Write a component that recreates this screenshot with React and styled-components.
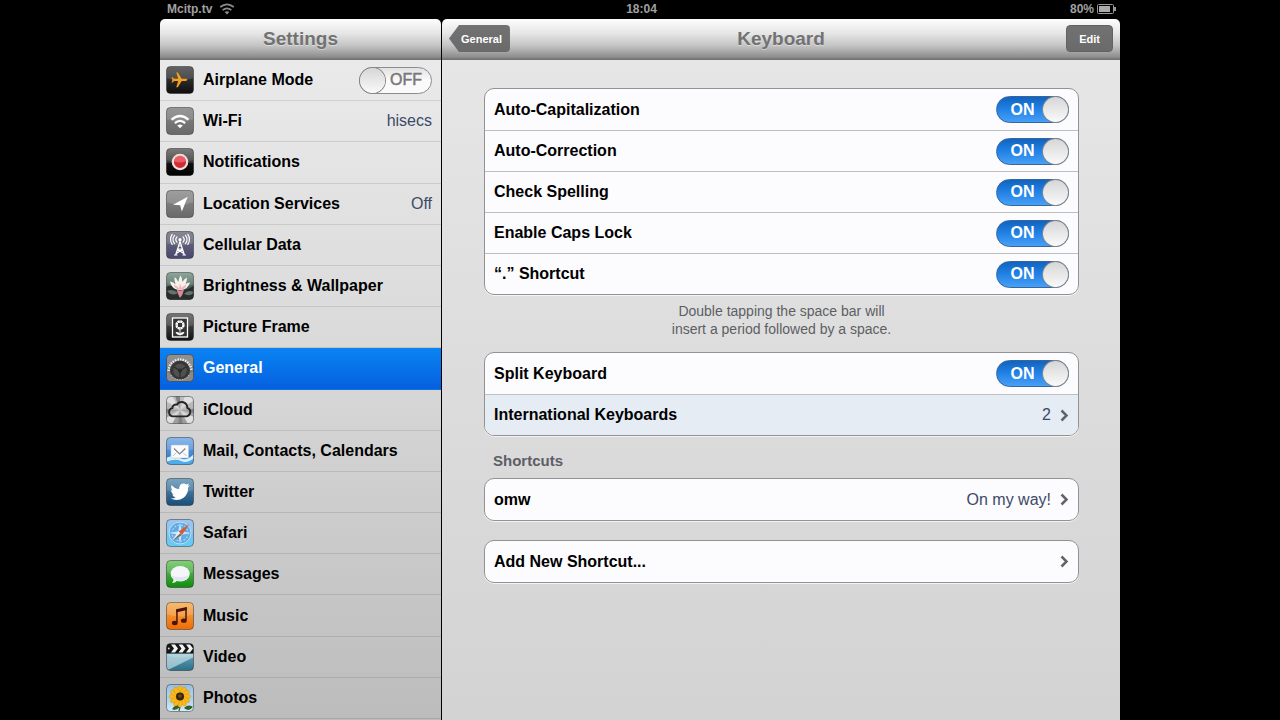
import { useState } from "react";
import styled, { createGlobalStyle } from "styled-components";

const GlobalStyle = createGlobalStyle`
*{
    box-sizing:border-box;
}

body{
    margin:0;
    background:#000;
    color:#000;
    font-family:"Liberation Sans", Arial, Helvetica, sans-serif;
}

a{
    color:inherit;
    text-decoration:none;
}
`;

// every app icon is a 28x28 rounded tile with a shine on its upper half
function Tile({ id, top, bottom, children }) {
    return (
        <TileSvg viewBox="0 0 28 28" aria-hidden="true">
            <defs>
                <linearGradient id={id} x1="0" y1="0" x2="0" y2="1">
                    <stop offset="0" stopColor={top} />
                    <stop offset="1" stopColor={bottom} />
                </linearGradient>
                <clipPath id={id + "-clip"}>
                    <rect x="0.5" y="0.5" width="27" height="27" rx="4" />
                </clipPath>
            </defs>
            <g clipPath={`url(#${id}-clip)`}>
                <rect width="28" height="28" fill={`url(#${id})`} />
                <path d="M0 0h28v12q-14 5-28 0z" fill="#fff" opacity="0.15" />
                {children}
            </g>
            <rect x="0.5" y="0.5" width="27" height="27" rx="4" fill="none" stroke="#222" strokeOpacity="0.45" />
        </TileSvg>
    );
}

const AirplaneIcon = () => (
    <Tile id="airplane" top="#4a4a4a" bottom="#0c0c0c">
        <path
            transform="translate(22.6 5) rotate(90) scale(0.77)"
            fill="#f9a01b"
            d="M21 16v-2l-8-5V3.5c0-.83-.67-1.5-1.5-1.5S10 2.67 10 3.5V9l-8 5v2l8-2.5V19l-2 1.5V22l3.5-1 3.5 1v-1.5L13 19v-5.5l8 2.5z"
        />
    </Tile>
);

const WifiIcon = () => (
    <Tile id="wifi" top="#858585" bottom="#696969">
        <g fill="none" stroke="#fff" strokeWidth="2.3">
            <path d="M5.6 12.6q8.4-7.2 16.8 0" />
            <path d="M8.8 16.1q5.2-4.4 10.4 0" />
        </g>
        <path d="M11.2 18.4q2.8-2 5.6 0L14 21.3z" fill="#fff" />
    </Tile>
);

const NotificationsIcon = () => (
    <Tile id="notifications" top="#666" bottom="#000">
        <rect y="15" width="28" height="13" fill="#000" opacity="0.6" />
        <circle cx="14" cy="14" r="7.2" fill="#d02c32" stroke="#f2dede" strokeWidth="2.2" />
        <path d="M8 13.5a6 6 0 0 1 12 0q-6 2-12 0z" fill="#ec6d70" opacity="0.8" />
    </Tile>
);

const LocationIcon = () => (
    <Tile id="location" top="#8f8f8f" bottom="#686868">
        <path d="M21.8 6.8L15.8 21.5l-1.6-6.2-7.2-.5z" fill="#fff" />
    </Tile>
);

const CellularIcon = () => (
    <Tile id="cellular" top="#737380" bottom="#46466e">
        <g fill="none" stroke="#fff" strokeWidth="1.2" strokeLinecap="round">
            <path d="M14 10.5L9.6 24M14 10.5L18.4 24M12.5 15h3M11.7 18h4.8M11.5 18.2l5.8 4M16.5 18.2l-5.8 4M8.5 24h2.5M17 24h2.5" />
            <path d="M11 5.8a4 4 0 0 0 0 5.4M17 5.8a4 4 0 0 1 0 5.4M8.6 4.4a6.4 6.4 0 0 0 0 8.2M19.4 4.4a6.4 6.4 0 0 1 0 8.2M6.2 3.4a9 9 0 0 0 0 10M21.8 3.4a9 9 0 0 1 0 10" />
        </g>
        <circle cx="14" cy="8.7" r="1.6" fill="#fff" />
    </Tile>
);

const BrightnessIcon = () => (
    <Tile id="brightness" top="#7b9a8e" bottom="#20302a">
        <path d="M0 15q7-3 14 1t14-3v15H0z" fill="#272e2d" />
        <path d="M1 19q6-3 11 2-6 4-11-2zM18 22q4-5 10-2-3 5-10 2z" fill="#66736d" />
        <path d="M13.5 18C8 18 5 14 4 9.5q4 .3 5.5 3Q8 8 8.5 5q3 2 3.8 5 .5-4 2.2-6.5Q16.500 6 16.500 10q1.500-3.500 4.500-4.500 0 4-1.500 7Q21 10.500 24 10.500 22 17 15.500 18z" fill="#f7f1ea" />
        <path d="M13.500 17.500Q9 17 7.500 13q3.500.5 5.500 3l1.200-5 1.300 5q2-3 5-3-1 4-5 4.800z" fill="#eeb6bf" />
        <path d="M10.500 17.500q3.500 2 7.500 0l-1.500 5-2.500 3.500-1.500-3z" fill="#d98b9c" />
    </Tile>
);

const PictureFrameIcon = () => (
    <Tile id="frame" top="#5f5f5f" bottom="#111">
        <rect x="6.5" y="5" width="15" height="19" fill="#333" stroke="#fff" strokeWidth="1.3" />
        <circle cx="14" cy="12" r="3.6" fill="none" stroke="#fff" strokeWidth="2.2" strokeDasharray="2.2 .6" />
        <circle cx="14" cy="12" r="3" fill="none" stroke="#fff" strokeWidth="1" />
        <path d="M14 16v6.5M14 21.500q-1-2.500-4-2 1 2.500 4 2zM14 21.500q1-2.500 4-2-1 2.500-4 2z" fill="#fff" stroke="#fff" strokeWidth=".9" />
    </Tile>
);

const GeneralIcon = () => (
    <Tile id="general" top="#7d7d7d" bottom="#777">
        <path d="M2.8 17a11.200 11.200 0 0 1 22.400 0" fill="none" stroke="#f0f0f0" strokeWidth="3" strokeDasharray="1.4 1.1" />
        <circle cx="14" cy="16.5" r="10" fill="#373737" />
        <circle cx="14" cy="16.500" r="6.800" fill="#505050" />
        <circle cx="14" cy="16.500" r="2" fill="#2b2b2b" />
        <path d="M14 16.500l-6-3.500M14 16.500l6-3.500M14 16.500v7" stroke="#2b2b2b" strokeWidth="1.200" />
        <path d="M0 17.500q3.500 0 5 3.500 3 4.500 9 4.500t9-4.500q1.500-3.500 5-3.500V28H0z" fill="#8a8a8a" />
        <path d="M5 21q3 4.800 9 4.800t9-4.800" fill="none" stroke="#b5b5b5" strokeWidth="1.200" strokeDasharray="1.300 1.200" />
    </Tile>
);

const ICloudIcon = () => (
    <Tile id="icloud" top="#b5b5b5" bottom="#9b9b9b">
        <path d="M14 14L0 5V0h6zM14 14L19 0h9v4zM14 14l14 7v7h-6zM14 14L6 28H0v-6z" fill="#e0e0e0" />
        <path d="M14 14L9 0h5zM14 14l14-1v4zM14 14l-2 14h5zM14 14L0 13v4z" fill="#828282" />
        <path
            transform="translate(-1.8 -2.8) scale(1.13)"
            d="M8 20.5a3.7 3.7 0 0 1-.8-7.3 3.2 3.2 0 0 1 4-3.1 5 5 0 0 1 9.2 2.900 3.900 3.900 0 0 1-.4 7.500z"
            fill="#ccc"
            fillOpacity=".4"
            stroke="#272727"
            strokeWidth="1.7"
        />
    </Tile>
);

const MailIcon = () => (
    <Tile id="mail" top="#78ade6" bottom="#1c70cf">
        <path d="M0 21q8-4 14 0t14-4v11H0z" fill="#d9f0ff" />
        <path d="M0 25q9-4 15-1t13-3v7H0z" fill="#4faae8" />
        <rect x="5" y="8" width="17.5" height="13" rx=".8" fill="#fbfbfb" stroke="#b4c6d6" strokeWidth=".6" />
        <path d="M8 11.500l5.700 5.500 5.700-5.500" fill="none" stroke="#7d858e" strokeWidth="1.200" />
        <path d="M7 19l3.500-3.500M20.500 19l-3.500-3.500" fill="none" stroke="#b9c0c7" strokeWidth="1" />
    </Tile>
);

const TwitterIcon = () => (
    <Tile id="twitter" top="#6397b8" bottom="#174b79">
        <path
            d="M4.5 20.5q3 .3 5.2-1.3-2.7-.4-3.5-2.8h1.6Q5 15 5 12l1.6.4Q4.3 10 5.7 7q3 3.8 7.4 4Q13 6 17 5.4q2.200-.1 3.400 1.200l2.700-1-1.400 2.300 2.300-.6-1.900 2.300q.2 6.500-4.500 10.200-6 4-13.100.7z"
            fill="#fff"
        />
    </Tile>
);

const SafariIcon = () => (
    <Tile id="safari" top="#8bb9ec" bottom="#62ccf5">
        <circle cx="14" cy="14" r="11" fill="#62aae6" stroke="#b9e0fa" strokeWidth="1" />
        <circle cx="14" cy="14" r="8" fill="none" stroke="#a5d7f7" strokeWidth="1.2" strokeDasharray="2 1.5" />
        <path d="M14 3l1.700 9.300L25 14l-9.300 1.700L14 25l-1.700-9.300L3 14l9.300-1.700z" fill="#c4e6fb" />
        <path d="M23.500 5L16 16 12.400 12.600z" fill="#d85a38" />
        <path d="M4.500 23.500L16 16l-3.600-3.400z" fill="#f1f1f4" />
        <path d="M4.500 23.500L16 16l-1.800-1.700z" fill="#6b6a78" />
    </Tile>
);

const MessagesIcon = () => (
    <Tile id="messages" top="#71c765" bottom="#0d8c0d">
        <path d="M7.5 18.5Q8 21 6 23q3.5 0 5.5-3z" fill="#f2f5f2" />
        <ellipse cx="14.2" cy="13.8" rx="9.6" ry="7.8" fill="#f4f6fa" />
        <path d="M5.500 15.500q8 3 17 0-2 5.500-8.500 5.500T5.500 15.500z" fill="#e2e7ef" />
    </Tile>
);

const MusicIcon = () => (
    <Tile id="music" top="#f5b15c" bottom="#ef6a00">
        <g transform="translate(-1.6 -2.6) scale(1.15)" fill="#4c1408">
            <path d="M10.200 8.500l9.300-2v2.800l-9.300 2z" />
            <path d="M10.900 9v11M18.800 7v11" stroke="#4c1408" strokeWidth="1.300" />
            <ellipse cx="9" cy="20.500" rx="2.500" ry="1.900" />
            <ellipse cx="16.900" cy="18.500" rx="2.500" ry="1.900" />
        </g>
    </Tile>
);

const VideoIcon = () => (
    <Tile id="video" top="#91c3d2" bottom="#276f88">
        <path d="M0 11h28v3L0 28z" fill="#d8edf2" opacity="0.6" />
        <rect width="28" height="10.5" fill="#151515" />
        <path d="M5 1.500h4l3 4h-4zM12.500 1.500h4l3 4h-4zM20 1.500h4l3 4h-4zM8 5.500h4l-3 4H5zM15.500 5.500h4l-3 4h-4zM23 5.500h4l-3 4h-4z" fill="#f2f2f2" />
        <circle cx="2.8" cy="5.5" r=".9" fill="#ddd" />
    </Tile>
);

const PhotosIcon = () => (
    <Tile id="photos" top="#7eb3e4" bottom="#d6eefa">
        <path d="M14 18q1 4-1 9M14 22q-5-1-7 3 4 1 7-3zM19 24q3-3 7-1-3 4-7 1z" fill="#315f26" stroke="#315f26" strokeWidth="1.2" />
        <g fill="#f8b91c" stroke="#d88d0a" strokeWidth=".4">
            {[0, 30, 60, 90, 120, 150, 180, 210, 240, 270, 300, 330].map((angle) => (
                <ellipse key={angle} cx="14" cy="6.500" rx="2.300" ry="4.800" transform={`rotate(${angle} 14 12.5)`} />
            ))}
        </g>
        <circle cx="14" cy="12.5" r="4" fill="#372511" />
        <circle cx="14" cy="12" r="1.8" fill="#6d4a22" />
    </Tile>
);

const menu = [
    { name: "Wi-Fi", Icon: WifiIcon, value: "hisecs" },
    { name: "Notifications", Icon: NotificationsIcon },
    { name: "Location Services", Icon: LocationIcon, value: "Off" },
    { name: "Cellular Data", Icon: CellularIcon },
    { name: "Brightness & Wallpaper", Icon: BrightnessIcon },
    { name: "Picture Frame", Icon: PictureFrameIcon },
    { name: "General", Icon: GeneralIcon },
    { name: "iCloud", Icon: ICloudIcon },
    { name: "Mail, Contacts, Calendars", Icon: MailIcon },
    { name: "Twitter", Icon: TwitterIcon },
    { name: "Safari", Icon: SafariIcon },
    { name: "Messages", Icon: MessagesIcon },
    { name: "Music", Icon: MusicIcon },
    { name: "Video", Icon: VideoIcon },
    { name: "Photos", Icon: PhotosIcon },
];

const options = ["Auto-Capitalization", "Auto-Correction", "Check Spelling", "Enable Caps Lock", "“.” Shortcut"];

function Switch({ id, defaultOn }) {
    const [on, setOn] = useState(defaultOn);
    return (
        <Track htmlFor={id} $on={on}>
            <HiddenCheckbox id={id} type="checkbox" checked={on} onChange={() => setOn(!on)} />
            <TrackText $on={on}>{on ? "ON" : "OFF"}</TrackText>
            <Knob />
        </Track>
    );
}

const Chevron = () => (
    <ChevronSvg viewBox="0 0 9 13" aria-hidden="true">
        <path d="M1.500 1.500l5 5-5 5" fill="none" stroke="#646468" strokeWidth="2.500" />
    </ChevronSvg>
);

function App() {
    const [active, setActive] = useState("General");

    return (
        <Device>
            <GlobalStyle />
            <StatusBar>
                <StatusSide>
                    Mcitp.tv
                    <svg width="16" height="12" viewBox="0 0 14 11" aria-hidden="true">
                        <g fill="none" stroke="#8c8c8c" strokeWidth="1.6">
                            <path d="M.8 3.700q6.200-5 12.400 0" />
                            <path d="M3 6.500q4-3.300 8 0" />
                        </g>
                        <path d="M4.800 8.200q2.200-1.500 4.400 0L7 10.600z" fill="#8c8c8c" />
                    </svg>
                </StatusSide>
                <span>18:04</span>
                <StatusSide $end>
                    80%
                    <svg width="19" height="10" viewBox="0 0 19 10" aria-hidden="true">
                        <rect x=".5" y=".5" width="16" height="9" rx="1" fill="none" stroke="#999" />
                        <rect x="2" y="2" width="11" height="6" fill="#aaa" />
                        <path d="M17 3h2v4h-2z" fill="#999" />
                    </svg>
                </StatusSide>
            </StatusBar>

            <Panes>
                <Sidebar>
                    <Header>
                        <Title>Settings</Title>
                    </Header>
                    <Menu>
                        <MenuItem>
                            <AirplaneIcon />
                            <MenuLabel htmlFor="airplane-mode">Airplane Mode</MenuLabel>
                            <Switch id="airplane-mode" defaultOn={false} />
                        </MenuItem>
                        {menu.map(({ name, Icon, value }) => (
                            <MenuItem key={name} as="a" href="#" $active={name === active} onClick={() => setActive(name)}>
                                <Icon />
                                <MenuLabel as="span">{name}</MenuLabel>
                                {value && <Value>{value}</Value>}
                            </MenuItem>
                        ))}
                    </Menu>
                </Sidebar>

                <Detail>
                    <Header>
                        <BackButton>General</BackButton>
                        <Title>Keyboard</Title>
                        <EditButton>Edit</EditButton>
                    </Header>
                    <Content>
                        <Card>
                            {options.map((option, i) => (
                                <Row key={option}>
                                    <label htmlFor={"option-" + i}>{option}</label>
                                    <Switch id={"option-" + i} defaultOn />
                                </Row>
                            ))}
                        </Card>
                        <Note>Double tapping the space bar will insert a period followed by a space.</Note>

                        <Card>
                            <Row>
                                <label htmlFor="split">Split Keyboard</label>
                                <Switch id="split" defaultOn />
                            </Row>
                            <Row as="a" href="#" $highlight>
                                <span>International Keyboards</span>
                                <RowEnd>
                                    <Value>2</Value>
                                    <Chevron />
                                </RowEnd>
                            </Row>
                        </Card>

                        <SectionTitle>Shortcuts</SectionTitle>
                        <Card>
                            <Row as="a" href="#">
                                <span>omw</span>
                                <RowEnd>
                                    <Value>On my way!</Value>
                                    <Chevron />
                                </RowEnd>
                            </Row>
                        </Card>
                        <Spacer />
                        <Card>
                            <Row as="a" href="#">
                                <span>Add New Shortcut...</span>
                                <Chevron />
                            </Row>
                        </Card>
                    </Content>
                </Detail>
            </Panes>
        </Device>
    );
}

const Device = styled.div`
display:flex;
flex-direction:column;
max-width:960px;
min-height:100vh;
margin:0 auto;
`;

const StatusBar = styled.div`
display:grid;
grid-template-columns:1fr auto 1fr;
align-items:center;
height:19px;
padding:0 4px 2px 7px;
color:#a0a0a0;
font-size:12px;
font-weight:700;
`;

const StatusSide = styled.div`
display:flex;
align-items:center;
justify-content:${(props) => (props.$end ? "flex-end" : "flex-start")};
gap:${(props) => (props.$end ? "3px" : "7px")};
`;

const Panes = styled.div`
display:flex;
flex:1;
gap:1px;
`;

const Sidebar = styled.nav`
display:flex;
flex-direction:column;
flex:0 0 281px;
`;

const Detail = styled.main`
display:flex;
flex-direction:column;
flex:1;
min-width:0;
`;

const Header = styled.header`
display:grid;
grid-template-columns:1fr auto 1fr;
align-items:center;
height:41px;
padding:0 7px 2px;
background:linear-gradient(#fdfdfd 0%, #e6e6e6 35%, #c4c4c4 65%, #8f8f8f 92%, #6c6c6c 100%);
border-radius:5px 5px 0 0;
`;

const Title = styled.h1`
grid-column:2;
margin:0;
color:#727272;
font-size:19px;
line-height:24px;
text-shadow:0 1px 0 rgba(255,255,255,0.4);
`;

const HeaderButton = styled.button`
grid-row:1;
height:27px;
border:0;
background:linear-gradient(#727272, #6a6a6a);
color:#fff;
font-family:inherit;
font-size:11px;
font-weight:700;
`;

const BackButton = styled(HeaderButton)`
grid-column:1;
justify-self:start;
padding:0 8px 0 12px;
border-radius:0 4px 4px 0;
clip-path:polygon(0 50%, 10px 0, 100% 0, 100% 100%, 10px 100%);
`;

const EditButton = styled(HeaderButton)`
grid-column:3;
justify-self:end;
padding:0 12px;
border:1px solid #626262;
border-radius:4px;
`;

const Menu = styled.div`
display:grid;
flex:1;
grid-auto-rows:minmax(41px, 1fr);
padding-bottom:1px;
background:linear-gradient(#eaeaea, #d9d9d9 45%, #bcbcbc);
`;

const MenuItem = styled.div`
display:flex;
align-items:center;
padding:0 9px 0 6px;
border-bottom:1px solid rgba(0,0,0,0.1);
font-size:16px;
line-height:20px;
${(props) =>
    props.$active &&
    `
background:linear-gradient(#0a84f2, #0560e0);
color:#fff;
`}
`;

const MenuLabel = styled.label`
flex:1;
padding-left:9px;
font-weight:700;
`;

const TileSvg = styled.svg`
width:28px;
height:28px;
flex:none;
`;

const Value = styled.span`
color:#3b4a66;
font-size:16px;
font-weight:400;
`;

const Track = styled.label`
display:flex;
align-items:center;
flex:none;
flex-direction:${(props) => (props.$on ? "row" : "row-reverse")};
width:73px;
height:27px;
border:1px solid ${(props) => (props.$on ? "#35669f" : "#8c8c8c")};
border-radius:14px;
background:${(props) => (props.$on ? "linear-gradient(#1263bd, #1f7fe4 45%, #48a0f6)" : "linear-gradient(#e2e2e2, #fafafa 50%)")};
cursor:pointer;
`;

const HiddenCheckbox = styled.input`
position:absolute;
width:1px;
height:1px;
margin:0;
opacity:0;
`;

const TrackText = styled.span`
flex:1;
padding:${(props) => (props.$on ? "0 0 0 5px" : "0 4px 0 0")};
color:${(props) => (props.$on ? "#fff" : "#77787a")};
font-size:16px;
font-weight:${(props) => (props.$on ? 700 : 400)};
-webkit-text-stroke:${(props) => (props.$on ? "0" : "0.5px #77787a")};
line-height:20px;
text-align:center;
`;

const Knob = styled.span`
width:25px;
height:25px;
border-radius:50%;
background:linear-gradient(#d6d6d6, #fafafa);
box-shadow:0 0 0 1px #858585;
`;

const Content = styled.div`
flex:1;
padding:28px 41px 28px 42px;
background:linear-gradient(#e6e6e6, #dcdcdc 50%, #d3d3d3);
`;

const Card = styled.section`
overflow:hidden;
border:1px solid #929294;
border-radius:10px;
background:#fcfbfd;
box-shadow:0 1px 0 rgba(255,255,255,0.7);
`;

const Row = styled.div`
display:flex;
align-items:center;
justify-content:space-between;
height:41px;
padding:0 9px;
background:${(props) => (props.$highlight ? "#e5ecf4" : "transparent")};
font-size:16px;
font-weight:700;
line-height:20px;

& + &{
    border-top:1px solid #bdbfc2;
}
`;

const RowEnd = styled.span`
display:flex;
align-items:center;
gap:9px;
`;

const ChevronSvg = styled.svg`
width:9px;
height:13px;
`;

const Note = styled.p`
max-width:240px;
margin:7px auto 14px;
color:#5d5e63;
font-size:14px;
line-height:18px;
text-align:center;
`;

const SectionTitle = styled.h2`
margin:0;
padding:15px 9px 7px;
color:#5d5e66;
font-size:15px;
line-height:20px;
`;

const Spacer = styled.div`
height:19px;
`;

export default App;
